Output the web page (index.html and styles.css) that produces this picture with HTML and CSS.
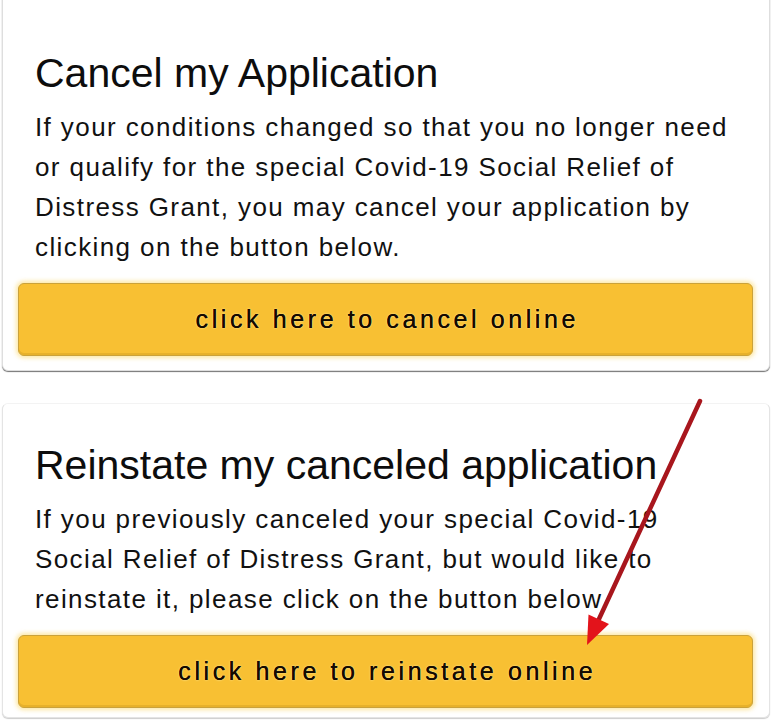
FILE: index.html
```html
<!DOCTYPE html>
<html lang="en">
<head>
<meta charset="utf-8">
<title>Cancel / Reinstate Application</title>
<link rel="stylesheet" href="styles.css">
</head>
<body>
<div class="page">
  <section class="card card-first">
    <h2 class="title">Cancel my Application</h2>
    <p class="text">If your conditions changed so that you no longer need or qualify for the special Covid-19 Social Relief of Distress Grant, you may cancel your application by clicking on the button below.</p>
    <a class="btn" href="#">click here to cancel online</a>
  </section>
  <section class="card card-second">
    <h2 class="title">Reinstate my canceled application</h2>
    <p class="text">If you previously canceled your special Covid-19 Social Relief of Distress Grant, but would like to reinstate it, please click on the button below.</p>
    <a class="btn" href="#">click here to reinstate online</a>
  </section>
  <svg class="arrow" width="774" height="722" viewBox="0 0 774 722" xmlns="http://www.w3.org/2000/svg">
    <line x1="700" y1="413" x2="599" y2="631" stroke="#a8161d" stroke-width="4.5" stroke-linecap="round"/>
    <polygon points="587,657 588.5,626.5 609,636" fill="#e3131b"/>
  </svg>
</div>
</body>
</html>
```
FILE: styles.css
```css
html, body {
  margin: 0;
  padding: 0;
  background: #ffffff;
}
body {
  font-family: "Liberation Sans", Arial, sans-serif;
  color: #111111;
  width: 774px;
  height: 722px;
  overflow: hidden;
}
.page {
  position: relative;
  width: 774px;
  height: 722px;
}
.card {
  box-sizing: border-box;
  width: 768px;
  margin-left: 2px;
  border: 1px solid #dedede;
  border-radius: 6px;
  background: #ffffff;
  box-shadow: 0 1px 1px rgba(0, 0, 0, 0.55);
  display: flex;
  flex-direction: column;
}
.card-first {
  margin-top: -12px;
  padding: 60px 0 14px 0;
}
.card-second {
  margin-top: 32px;
  padding: 37px 0 9px 0;
  border-color: #f3f3f3 #e4e4e4 #e4e4e4 #e4e4e4;
  box-shadow: 0 1px 1px rgba(0, 0, 0, 0.2);
}
.title {
  margin: 0;
  padding: 0 29px 0 32px;
  font-size: 41px;
  font-weight: normal;
  line-height: 48px;
  color: #0d0d0d;
}
.text {
  margin: 10px 0 0 0;
  padding: 0 29px 0 32px;
  font-size: 26px;
  line-height: 40px;
  letter-spacing: 1.4px;
  color: #111111;
}
.btn {
  box-sizing: border-box;
  margin: 16px 16px 0 15px;
  height: 73px;
  display: flex;
  align-items: center;
  justify-content: center;
  background: #f8c033;
  border: 1px solid #caa23c;
  border-radius: 6px;
  box-shadow: 0 0 4px 2px rgba(252, 222, 130, 0.7), inset 0 -2px 0 rgba(200, 150, 30, 0.35);
  color: #140a00;
  font-size: 25px;
  letter-spacing: 3.6px;
  text-decoration: none;
  text-shadow: 0 0 0.6px #140a00, 0 0 2px #fff2b8;
  padding-left: 3.6px;
}
.arrow {
  position: absolute;
  left: 0;
  top: 0;
  pointer-events: none;
}
```
